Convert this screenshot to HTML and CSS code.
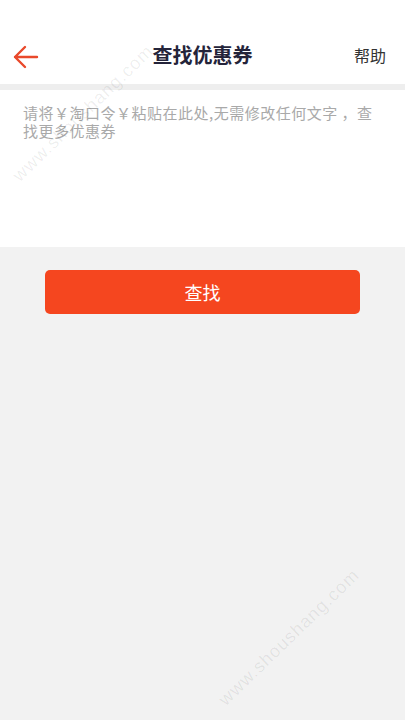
FILE: index.html
```html
<!DOCTYPE html>
<html lang="zh-CN">
<head>
    <meta charset="UTF-8">
    <title>查找优惠券</title>
    <meta name="viewport" content="width=device-width, initial-scale=1">
    <link rel="stylesheet" href="styles.css">
</head>
<body>

<div class="page">
    <!-- Top bar -->
    <header class="topbar">
        <a class="back" href="#" aria-label="返回">
            <svg width="26" height="24" viewBox="0 0 26 24">
                <path d="M2 12 H24 M12 2 L2 12 L12 22" fill="none" stroke="#e9492b" stroke-width="2.4" stroke-linecap="round" stroke-linejoin="round"/>
            </svg>
        </a>
        <h1 class="title">查找优惠券</h1>
        <a class="help" href="#">帮助</a>
    </header>

    <div class="divider"></div>

    <!-- Paste box -->
    <div class="paste">
        <textarea class="paste-input" placeholder="请将￥淘口令￥粘贴在此处,无需修改任何文字 ，查找更多优惠券"></textarea>
    </div>

    <button class="search-btn">查找</button>

    <!-- Watermarks from the screenshot source -->
    <span class="mark mark-top">www.shoushang.com</span>
    <span class="mark mark-bottom">www.shoushang.com</span>
</div>

</body>
</html>
```

FILE: styles.css
```css
/* Reset */
* {
    box-sizing: border-box;
    margin: 0;
    padding: 0;
}

body {
    font-family: "Noto Sans CJK SC", "Noto Sans", sans-serif;
    background: #f2f2f2;
    color: #333;
}

.page {
    position: relative;
    min-height: 720px;
    overflow: hidden;
}

.topbar {
    display: flex;
    align-items: center;
    justify-content: space-between;
    height: 84px;
    padding: 30px 19px 0 13px;
    background: #fff;
    position: relative;
}

.back {
    display: flex;
    align-items: center;
    width: 30px;
}

.title {
    position: absolute;
    left: 0;
    right: 0;
    top: 30px;
    line-height: 50px;
    text-align: center;
    font-size: 20px;
    font-weight: bold;
    color: #24243a;
    pointer-events: none;
}

.help {
    font-size: 16px;
    color: #333;
    text-decoration: none;
    line-height: 46px;
    margin-bottom: 4px;
}

.divider {
    height: 6px;
    background: #eeeeee;
}

.paste {
    background: #fff;
    height: 157px;
}

.paste-input {
    display: block;
    width: 100%;
    height: 100%;
    padding: 14px 24px 0 23px;
    border: none;
    outline: none;
    resize: none;
    font-family: "Noto Sans CJK SC", "Noto Sans", sans-serif;
    font-size: 15px;
    letter-spacing: 0.5px;
    line-height: 18px;
    color: #333;
    background: transparent;
}

.paste-input::placeholder {
    color: #a9a9a9;
}

.search-btn {
    display: block;
    width: 315px;
    height: 44px;
    margin: 23px 0 0 45px;
    border: none;
    border-radius: 5px;
    background: #f5461f;
    color: #fff;
    font-family: "Noto Sans CJK SC", "Noto Sans", sans-serif;
    font-size: 18px;
    cursor: pointer;
}

/* Watermarks lie over the content */
.mark {
    position: absolute;
    font-family: "Liberation Sans", Arial, sans-serif;
    font-size: 18px;
    letter-spacing: 1px;
    color: rgba(0, 0, 0, 0.07);
    transform: rotate(-44deg);
    transform-origin: left center;
    white-space: nowrap;
    pointer-events: none;
}

.mark-top {
    left: 16px;
    top: 168px;
}

.mark-bottom {
    left: 222px;
    top: 692px;
}
```
